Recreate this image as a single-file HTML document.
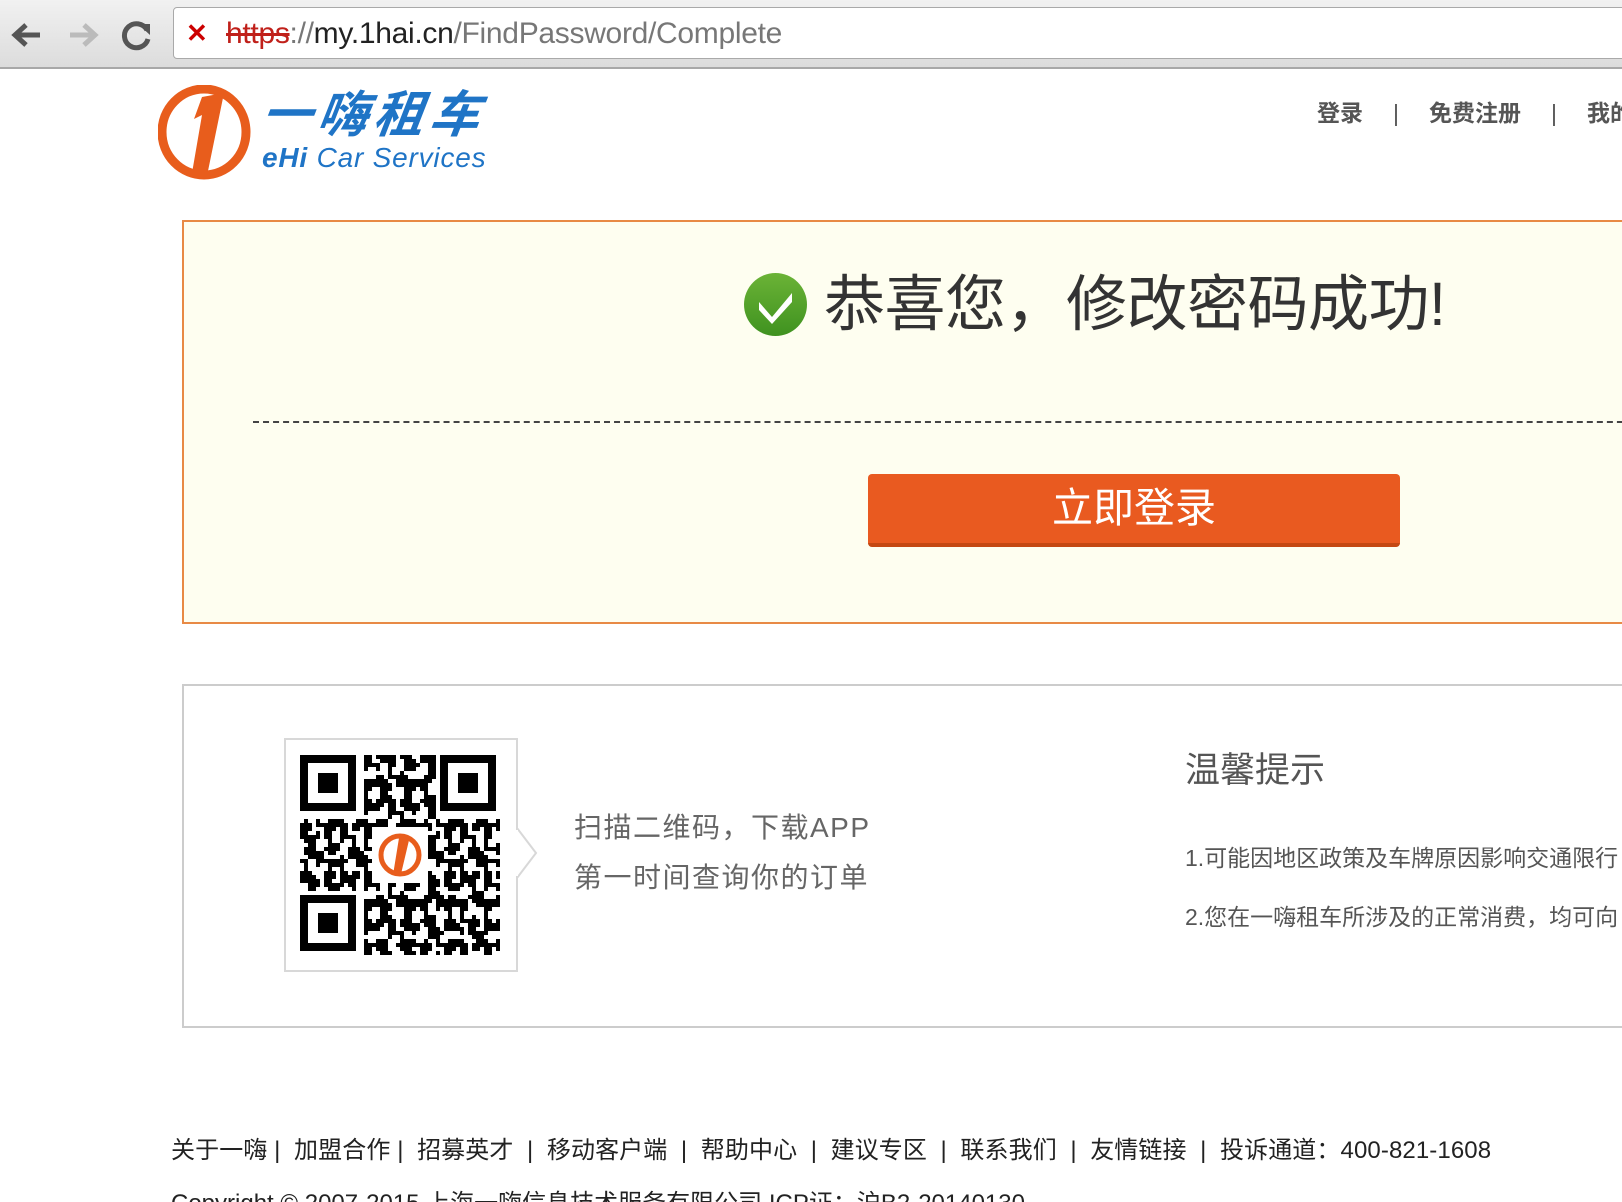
<!DOCTYPE html>
<html><head><meta charset="utf-8"><style>
*{margin:0;padding:0;box-sizing:border-box}
html,body{width:1622px;height:1202px;overflow:hidden;background:#fff;font-family:"Liberation Sans","Noto Sans CJK SC",sans-serif;position:relative}
.abs{position:absolute;white-space:nowrap}
</style></head><body>
<div class="abs" style="left:0;top:0;width:1622px;height:69px;background:linear-gradient(#f1f1f1,#dcdcdc);border-bottom:2px solid #a8a8a8"></div>
<svg class="abs" style="left:6px;top:18px" width="150" height="34" viewBox="0 0 150 34">
<path d="M34 17H10M20 7L9 17l11 10" stroke="#555" stroke-width="5" fill="none"/>
<path d="M64 17h24M78 7l11 10-11 10" stroke="#bbb" stroke-width="5" fill="none"/>
<path d="M141 12a12 12 0 1 0 1 9" stroke="#555" stroke-width="5" fill="none"/><path d="M132 6l12 0 0 11z" fill="#555"/>
</svg>
<div class="abs" style="left:173px;top:7px;width:1460px;height:52px;background:#fff;border:1px solid #a9a9a9;border-radius:4px"></div>
<div class="abs" style="left:186px;top:18px;width:26px;height:30px;font-size:26px;color:#c00;font-weight:bold;line-height:30px">✕</div>
<div class="abs" style="left:226px;top:16px;font-size:30px;line-height:36px;color:#222;letter-spacing:-0.3px"><span style="color:#c0201a;text-decoration:line-through">https</span><span style="color:#777">://</span>my.1hai.cn<span style="color:#777">/FindPassword/Complete</span></div>
<svg class="abs" style="left:158px;top:85px" width="96" height="95" viewBox="0 0 96 95">
<ellipse cx="46" cy="47" rx="42" ry="43" fill="none" stroke="#e85d1c" stroke-width="9"/>
<path d="M44 12 L66 8 L50 86 L34 88 L44 30 L36 34 Z" fill="#e85d1c"/>
</svg>
<div class="abs" style="left:262px;top:86px;font-size:50px;line-height:58px;font-weight:bold;font-style:italic;color:#1f74c6;letter-spacing:6px;transform:skewX(-8deg)">一嗨租车</div>
<div class="abs" style="left:262px;top:142px;font-size:28px;line-height:32px;font-style:italic;color:#1f74c6;letter-spacing:0.8px"><b>eHi</b> Car Services</div>
<div class="abs" style="left:1317px;top:98px;font-size:23px;line-height:30px;color:#555;font-weight:bold">登录<span style="font-weight:normal;margin:0 30px">|</span>免费注册<span style="font-weight:normal;margin:0 30px">|</span>我的</div>
<div class="abs" style="left:182px;top:220px;width:1500px;height:404px;background:#fefef0;border:2px solid #e88a45"></div>
<svg class="abs" style="left:743px;top:272px" width="65" height="65" viewBox="0 0 65 65">
<defs><linearGradient id="g" x1="0" y1="0" x2="0" y2="1"><stop offset="0" stop-color="#6bb336"/><stop offset="1" stop-color="#3f9220"/></linearGradient></defs>
<circle cx="32.5" cy="32.5" r="31.5" fill="url(#g)"/>
<path d="M16 30 L29 45 L49 21 L49 30 L29 52 L16 38Z" fill="#fff"/>
</svg>
<div class="abs" style="left:824px;top:264px;font-size:61px;line-height:80px;color:#333;letter-spacing:-0.5px">恭喜您，修改密码成功!</div>
<div class="abs" style="left:253px;top:421px;width:1400px;border-top:2px dashed #444"></div>
<div class="abs" style="left:868px;top:474px;width:532px;height:73px;background:#e95a20;border-radius:4px;border-bottom:4px solid #c44812;color:#fff;font-size:41px;line-height:68px;text-align:center">立即登录</div>
<div class="abs" style="left:182px;top:684px;width:1500px;height:344px;border:2px solid #ccc"></div>
<div class="abs" style="left:284px;top:738px;width:234px;height:234px;border:2px solid #d8d8d8;background:#fff"></div>
<svg class="abs" style="left:516px;top:828px" width="24" height="50" viewBox="0 0 24 50"><path d="M1 0 L20 25 L1 50" fill="#fff" stroke="#d8d8d8" stroke-width="2"/><rect x="0" y="2" width="2" height="46" fill="#fff"/></svg>
<svg class="abs" style="left:300px;top:755px" width="200" height="200" viewBox="0 0 200 200">
<defs><pattern id="q" width="40" height="40" patternUnits="userSpaceOnUse">
<rect width="40" height="40" fill="#fff"/>
<rect x="0" y="0" width="16" height="8" fill="#000"/><rect x="24" y="0" width="8" height="16" fill="#000"/>
<rect x="8" y="8" width="8" height="16" fill="#000"/><rect x="32" y="8" width="8" height="8" fill="#000"/>
<rect x="0" y="24" width="8" height="16" fill="#000"/><rect x="16" y="24" width="16" height="8" fill="#000"/>
<rect x="24" y="32" width="8" height="8" fill="#000"/><rect x="32" y="24" width="8" height="8" fill="#000"/>
<rect x="16" y="16" width="8" height="8" fill="#000"/></pattern>
<pattern id="q2" x="4" y="12" width="24" height="24" patternUnits="userSpaceOnUse">
<rect x="0" y="8" width="8" height="8" fill="#000"/><rect x="16" y="0" width="8" height="8" fill="#fff"/><rect x="12" y="16" width="4" height="8" fill="#000"/></pattern></defs>
<rect width="200" height="200" fill="url(#q)"/>
<rect width="200" height="200" fill="url(#q2)"/>
<g fill="#fff"><rect x="0" y="0" width="64" height="64"/><rect x="136" y="0" width="64" height="64"/><rect x="0" y="136" width="64" height="64"/></g>
<g fill="none" stroke="#000" stroke-width="8"><rect x="4" y="4" width="48" height="48"/><rect x="144" y="4" width="48" height="48"/><rect x="4" y="144" width="48" height="48"/></g>
<g fill="#000"><rect x="18" y="18" width="20" height="20"/><rect x="158" y="18" width="20" height="20"/><rect x="18" y="158" width="20" height="20"/></g>
<rect x="72" y="72" width="56" height="56" fill="#fff"/>
<circle cx="100" cy="100" r="19" fill="none" stroke="#e85d1c" stroke-width="5"/>
<path d="M99 83 L110 81 L101 119 L93 120Z" fill="#e85d1c"/>
</svg>
<div class="abs" style="left:574px;top:810px;font-size:28px;line-height:36px;color:#666;letter-spacing:1.5px">扫描二维码，下载APP</div>
<div class="abs" style="left:574px;top:860px;font-size:28px;line-height:36px;color:#666;letter-spacing:1.5px">第一时间查询你的订单</div>
<div class="abs" style="left:1185px;top:748px;font-size:35px;line-height:46px;color:#555">温馨提示</div>
<div class="abs" style="left:1185px;top:843px;font-size:23px;line-height:30px;color:#555">1.可能因地区政策及车牌原因影响交通限行</div>
<div class="abs" style="left:1185px;top:902px;font-size:23px;line-height:30px;color:#555">2.您在一嗨租车所涉及的正常消费，均可向</div>
<div class="abs" style="left:171px;top:1135px;font-size:24px;line-height:32px;color:#222;letter-spacing:0.1px">关于一嗨 | &nbsp;加盟合作 | &nbsp;招募英才 &nbsp;| &nbsp;移动客户端 &nbsp;| &nbsp;帮助中心 &nbsp;| &nbsp;建议专区 &nbsp;| &nbsp;联系我们 &nbsp;| &nbsp;友情链接 &nbsp;| &nbsp;投诉通道：400-821-1608</div>
<div class="abs" style="left:171px;top:1188px;font-size:24px;line-height:32px;color:#222">Copyright © 2007-2015 上海一嗨信息技术服务有限公司 ICP证：沪B2-20140130</div>
</body></html>
